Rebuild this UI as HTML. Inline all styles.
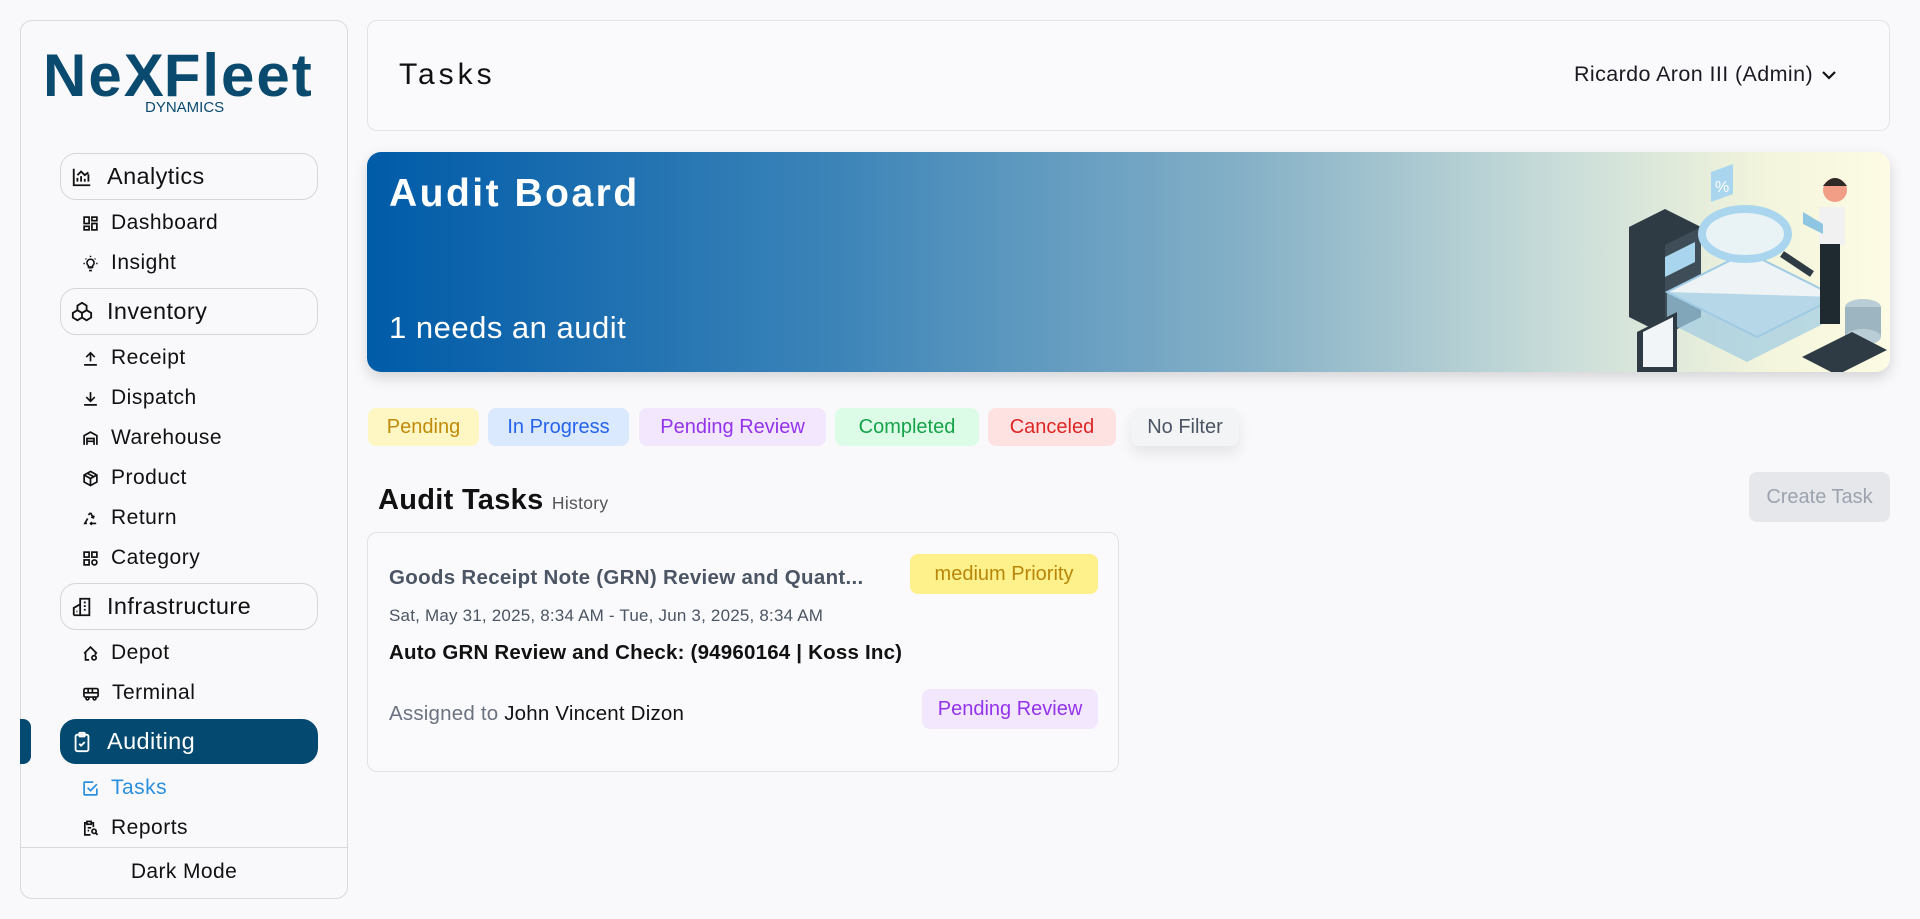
<!DOCTYPE html>
<html><head><meta charset="utf-8"><style>
*{box-sizing:border-box;margin:0;padding:0}
body{width:1920px;height:919px;background:#f9f9fb;font-family:"Liberation Sans",sans-serif;position:relative;overflow:hidden;color:#111}
.abs{position:absolute}
.side{left:20px;top:20px;width:328px;height:879px;border:1px solid #d7d9de;border-radius:12px;background:#f9f9fb}
.grp{position:absolute;left:40px;width:318px;height:47px;border:1px solid #d4d6da;border-radius:16px;font-size:23.5px;font-weight:500;display:flex;align-items:center;padding-left:10px;letter-spacing:.4px}
.grp svg{margin-right:14px}
.it{position:absolute;left:82px;font-size:21px;display:flex;align-items:center;color:#111;letter-spacing:.5px}
.it svg{margin-right:12px}
.chip{position:absolute;top:408px;height:38px;border-radius:8px;font-size:20px;display:flex;align-items:center;justify-content:center;white-space:nowrap}
.badge{position:absolute;height:40px;border-radius:8px;font-size:20px;display:flex;align-items:center;justify-content:center;white-space:nowrap}
</style></head><body>
<div class="abs side">
 <div class="abs" style="left:22px;top:20px;font-size:60px;font-weight:bold;color:#0a4a6e;letter-spacing:2px">Ne<span style="letter-spacing:0px">X</span>Fleet</div>
 <div class="abs" style="left:124px;top:78px;font-size:15px;color:#0a4a6e">DYNAMICS</div>
</div>
<div class="grp" style="left:60px;top:153px;width:258px"><svg width="22" height="22" viewBox="0 0 24 24" fill="none" stroke="#111" stroke-width="2"><path d="M3 3v18h18M7 17v-4M11 17v-6M15 17v-3M19 17v-8M7 10l4-4 4 4 4-3"/></svg>Analytics</div>
<div class="it" style="top:211px"><svg width="17" height="17" viewBox="0 0 24 24" fill="none" stroke="#111" stroke-width="2.4"><rect x="3" y="3" width="7" height="9"/><rect x="14" y="3" width="7" height="5"/><rect x="14" y="12" width="7" height="9"/><rect x="3" y="16" width="7" height="5"/></svg>Dashboard</div>
<div class="it" style="top:251px"><svg width="17" height="17" viewBox="0 0 24 24" fill="none" stroke="#111" stroke-width="2.2"><path d="M9 18h6M10 22h4M12 6a5 5 0 0 0-3 9v2h6v-2a5 5 0 0 0-3-9zM2 12h2M20 12h2M5 5l1 1M19 5l-1 1M12 1v2"/></svg>Insight</div>
<div class="grp" style="left:60px;top:288px;width:258px"><svg width="22" height="22" viewBox="0 0 24 24" fill="none" stroke="#111" stroke-width="2"><path d="M12 2l5 3v5l-5 3-5-3V5zM7 10l5 3v5l-5 3-5-3v-5zM17 10l5 3v5l-5 3-5-3v-5z"/></svg>Inventory</div>
<div class="it" style="top:346px"><svg width="17" height="17" viewBox="0 0 24 24" fill="none" stroke="#111" stroke-width="2.4"><path d="M12 16V4M6 10l6-6 6 6M3 21h18"/></svg>Receipt</div>
<div class="it" style="top:386px"><svg width="17" height="17" viewBox="0 0 24 24" fill="none" stroke="#111" stroke-width="2.4"><path d="M12 3v13M6 10l6 6 6-6M3 21h18"/></svg>Dispatch</div>
<div class="it" style="top:426px"><svg width="17" height="17" viewBox="0 0 24 24" fill="none" stroke="#111" stroke-width="2.4"><path d="M3 21V8l9-5 9 5v13M7 21v-9h10v9M7 16h10"/></svg>Warehouse</div>
<div class="it" style="top:466px"><svg width="17" height="17" viewBox="0 0 24 24" fill="none" stroke="#111" stroke-width="2.4"><path d="M12 2l9 5v10l-9 5-9-5V7zM3 7l9 5 9-5M12 12v10M7.5 4.5l9 5"/></svg>Product</div>
<div class="it" style="top:506px"><svg width="17" height="17" viewBox="0 0 24 24" fill="none" stroke="#111" stroke-width="2.4"><path d="M7 19H4l4-7M12 4l4 7M20 19h-8M9 7l3-3M14 17l-2 2 2 2M17 8l-1 3-3-1"/></svg>Return</div>
<div class="it" style="top:546px"><svg width="17" height="17" viewBox="0 0 24 24" fill="none" stroke="#111" stroke-width="2.4"><rect x="3" y="3" width="7" height="7"/><rect x="14" y="3" width="7" height="7"/><rect x="3" y="14" width="7" height="7"/><circle cx="17.5" cy="17.5" r="3.5"/></svg>Category</div>
<div class="grp" style="left:60px;top:583px;width:258px"><svg width="22" height="22" viewBox="0 0 24 24" fill="none" stroke="#111" stroke-width="2"><path d="M3 21h18M10 21V3h10v18M3 21v-8l7-4M14 7h2M14 11h2M14 15h2M6 17h1"/></svg>Infrastructure</div>
<div class="it" style="top:641px"><svg width="17" height="17" viewBox="0 0 24 24" fill="none" stroke="#111" stroke-width="2.4"><path d="M3 12l9-9 9 9M5 10v11h5M19 10v4"/><circle cx="17" cy="18" r="3"/></svg>Depot</div>
<div class="it" style="top:681px"><svg width="18" height="17" viewBox="0 0 24 24" fill="none" stroke="#111" stroke-width="2.4"><rect x="2" y="5" width="20" height="12" rx="2"/><path d="M2 11h20M8 5v6M14 5v6"/><circle cx="7" cy="19" r="2"/><circle cx="17" cy="19" r="2"/></svg>Terminal</div>
<div class="abs" style="left:20px;top:719px;width:11px;height:45px;background:#044a70;border-radius:0 8px 8px 0"></div>
<div class="grp" style="left:60px;top:719px;width:258px;height:45px;background:#044a70;border-color:#044a70;color:#fff"><svg width="22" height="22" viewBox="0 0 24 24" fill="none" stroke="#fff" stroke-width="2"><rect x="5" y="4" width="14" height="18" rx="2"/><rect x="9" y="2" width="6" height="4" rx="1"/><path d="M9 14l2 2 4-4"/></svg>Auditing</div>
<div class="it" style="top:776px;color:#2a8fde"><svg width="17" height="17" viewBox="0 0 24 24" fill="none" stroke="#2a8fde" stroke-width="2.4"><path d="M21 12v8a1 1 0 0 1-1 1H4a1 1 0 0 1-1-1V4a1 1 0 0 1 1-1h12M8 11l4 4 9-9"/></svg>Tasks</div>
<div class="it" style="top:816px"><svg width="17" height="17" viewBox="0 0 24 24" fill="none" stroke="#111" stroke-width="2.4"><path d="M12 21H4V4h3M13 4h3v6"/><rect x="7" y="2" width="6" height="4"/><circle cx="17" cy="16" r="3"/><path d="M19 18l3 3M8 11h5M8 15h2"/></svg>Reports</div>
<div class="abs" style="left:21px;top:847px;width:326px;height:1px;background:#d7d9de"></div>
<div class="abs" style="left:20px;top:860px;width:328px;text-align:center;font-size:21px;letter-spacing:.4px">Dark Mode</div>

<div class="abs" style="left:367px;top:20px;width:1523px;height:111px;border:1px solid #e3e4e8;border-radius:10px;background:#fafafc"></div>
<div class="abs" style="left:399px;top:58px;font-size:30px;letter-spacing:4px;font-weight:500">Tasks</div>
<div class="abs" style="left:1574px;top:62px;font-size:21.5px;color:#1a1a22;letter-spacing:.4px">Ricardo Aron III (Admin) <svg width="20" height="14" viewBox="0 0 18 14" fill="none" stroke="#111" stroke-width="2.2" style="vertical-align:middle"><path d="M3 4l6 6 6-6"/></svg></div>

<div class="abs" style="left:367px;top:152px;width:1523px;height:220px;border-radius:14px;background:linear-gradient(90deg,#005ba8 0%,#3a83b8 30%,#86b1c7 58%,#c8dcd9 78%,#f3f5dc 92%,#fdfbe4 100%);box-shadow:0 6px 14px rgba(0,0,0,.15);overflow:hidden">
 <div class="abs" style="left:22px;top:20px;font-size:39px;font-weight:bold;color:#fff;letter-spacing:2.5px">Audit Board</div>
 <div class="abs" style="left:22px;top:158px;font-size:31px;color:#fff;letter-spacing:.5px">1 needs an audit</div>
 <svg class="abs" style="left:1220px;top:0" width="303" height="220" viewBox="0 0 303 220">
  <path d="M42 75l36-18 36 18v90l-36 18-36-18z" fill="#2e3b44"/><path d="M78 93l36-18v90l-36 18z" fill="#3e4d57"/>
  <path d="M78 105l30-15v20l-30 15z" fill="#a9d6ee"/>
  <path d="M124 20l22-8v30l-22 8z" fill="#a9d6ee"/><text x="128" y="40" font-size="16" fill="#fff" font-family="Liberation Sans">%</text>
  <path d="M80 140l80-40 90 45-80 40z" fill="#eef3f6" stroke="#9ecbe3" stroke-width="2"/>
  <path d="M80 140v30l80 40 90-45v-20" fill="#9ecbe3" opacity=".7"/>
  <ellipse cx="158" cy="82" rx="43" ry="25" fill="#e9f2f5" stroke="#a9d6ee" stroke-width="8"/>
  <path d="M195 102l30 20" stroke="#2e3b44" stroke-width="7"/>
  <rect x="232" y="55" width="26" height="38" fill="#f1f1f1"/><rect x="233" y="92" width="20" height="80" fill="#1f2a30"/>
  <circle cx="248" cy="38" r="12" fill="#f29e86"/><path d="M236 34q12-16 24 0" fill="#2e2a28"/>
  <path d="M216 60l20 12v10l-20-10z" fill="#8ec5e1"/>
  <ellipse cx="276" cy="155" rx="18" ry="8" fill="#b9cdd6"/><rect x="258" y="155" width="36" height="30" fill="#9db5c1"/><ellipse cx="276" cy="185" rx="18" ry="8" fill="#b9cdd6"/>
  <path d="M50 180l40-20v60H50z" fill="#2e3b44"/><path d="M56 180l30-15v50H56z" fill="#f1f5f7"/>
  <path d="M215 205l50-25 35 18-50 25z" fill="#2e3b44"/>
 </svg>
</div>

<div class="chip" style="left:368px;width:111px;background:#fef6c3;color:#c08a0a">Pending</div>
<div class="chip" style="left:488px;width:141px;background:#dbe9fe;color:#2563eb">In Progress</div>
<div class="chip" style="left:639px;width:187px;background:#f3e7fd;color:#9333ea">Pending Review</div>
<div class="chip" style="left:835px;width:144px;background:#dcfce7;color:#16a34a">Completed</div>
<div class="chip" style="left:988px;width:128px;background:#fee2e2;color:#dc2626">Canceled</div>
<div class="chip" style="left:1131px;width:108px;background:#f3f4f6;color:#4b5563;box-shadow:0 8px 14px rgba(0,0,0,.08)">No Filter</div>

<div class="abs" style="left:378px;top:484px;font-size:29px;font-weight:bold;letter-spacing:.3px">Audit Tasks <span style="font-size:17.5px;font-weight:normal;color:#555">History</span></div>
<div class="abs" style="left:1749px;top:472px;width:141px;height:50px;border-radius:8px;background:#e5e7eb;color:#9ca3af;font-size:20px;display:flex;align-items:center;justify-content:center">Create Task</div>

<div class="abs" style="left:367px;top:532px;width:752px;height:240px;border:1px solid #e1e2e6;border-radius:10px;background:#fafafc">
 <div class="abs" style="left:21px;top:33px;font-size:20.5px;font-weight:bold;color:#4b5563;letter-spacing:.3px">Goods Receipt Note (GRN) Review and Quant...</div>
 <div class="badge" style="left:542px;top:21px;width:188px;background:#fef08a;color:#b7860b">medium Priority</div>
 <div class="abs" style="left:21px;top:73px;font-size:17px;color:#4b5563;letter-spacing:.2px">Sat, May 31, 2025, 8:34 AM - Tue, Jun 3, 2025, 8:34 AM</div>
 <div class="abs" style="left:21px;top:108px;font-size:20.5px;font-weight:bold;letter-spacing:.2px">Auto GRN Review and Check: (94960164 | Koss Inc)</div>
 <div class="abs" style="left:21px;top:169px;font-size:20.5px;color:#6b7280;letter-spacing:.2px">Assigned to <span style="color:#111;font-weight:500">John Vincent Dizon</span></div>
 <div class="badge" style="left:554px;top:156px;width:176px;background:#f3e7fd;color:#9333ea">Pending Review</div>
</div>
</body></html>
